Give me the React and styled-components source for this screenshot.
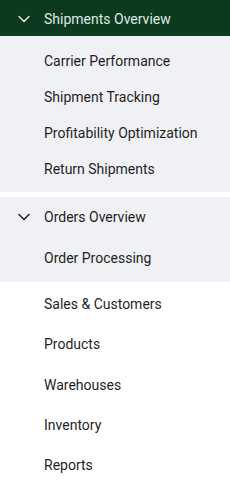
import React from 'react';
import styled, { createGlobalStyle } from 'styled-components';
import { ChevronDown } from 'lucide-react';

const GlobalStyle = createGlobalStyle`
body {
  margin: 0;
  background: #ffffff;
  font-family: Roboto, "Liberation Sans", sans-serif;
}
`;

const groups = [
  {
    title: 'Shipments Overview',
    active: true,
    items: ['Carrier Performance', 'Shipment Tracking', 'Profitability Optimization', 'Return Shipments'],
  },
  {
    title: 'Orders Overview',
    items: ['Order Processing'],
  },
];

const links = ['Sales & Customers', 'Products', 'Warehouses', 'Inventory', 'Reports'];

const App = () => {
  return (
    <>
      <GlobalStyle />
      <Nav>
        {groups.map((g) => (
          <Group key={g.title}>
            <GroupHeader $active={g.active}>
              <Chevron><ChevronDown size={20} strokeWidth={1.7} /></Chevron>
              {g.title}
            </GroupHeader>
            <SubList $active={g.active}>
              {g.items.map((item) => (
                <SubItem key={item}>{item}</SubItem>
              ))}
            </SubList>
          </Group>
        ))}
        <Links>
          {links.map((l) => (
            <LinkItem key={l}>{l}</LinkItem>
          ))}
        </Links>
      </Nav>
    </>
  );
};

const Nav = styled.nav`
width: 230px;
display: flex;
flex-direction: column;
`;

const Group = styled.div`
display: flex;
flex-direction: column;
background: #f0f1f4;
& + & {
  margin-top: 5px;
}
`;

const GroupHeader = styled.div`
height: ${(p) => (p.$active ? '36px' : '38px')};
display: flex;
align-items: center;
padding-left: 14px;
padding-top: 1px;
box-sizing: border-box;
font-size: 14px;
color: ${(p) => (p.$active ? '#dfe9e2' : '#1f1f1f')};
background: ${(p) => (p.$active ? '#0b3a1f' : 'transparent')};
`;

const Chevron = styled.span`
width: 30px;
display: flex;
align-items: center;
`;

const SubList = styled.div`
display: flex;
flex-direction: column;
padding: ${(p) => (p.$active ? '7px 0 5px' : '5px 0 6px')};
`;

const SubItem = styled.div`
height: 36px;
display: flex;
align-items: center;
padding-left: 44px;
font-size: 14px;
color: #1f1f1f;
`;

const Links = styled.div`
display: flex;
flex-direction: column;
padding-top: 2px;
`;

const LinkItem = styled.div`
height: 40.25px;
display: flex;
align-items: center;
padding-left: 44px;
font-size: 14px;
color: #1f1f1f;
`;

export default App;
